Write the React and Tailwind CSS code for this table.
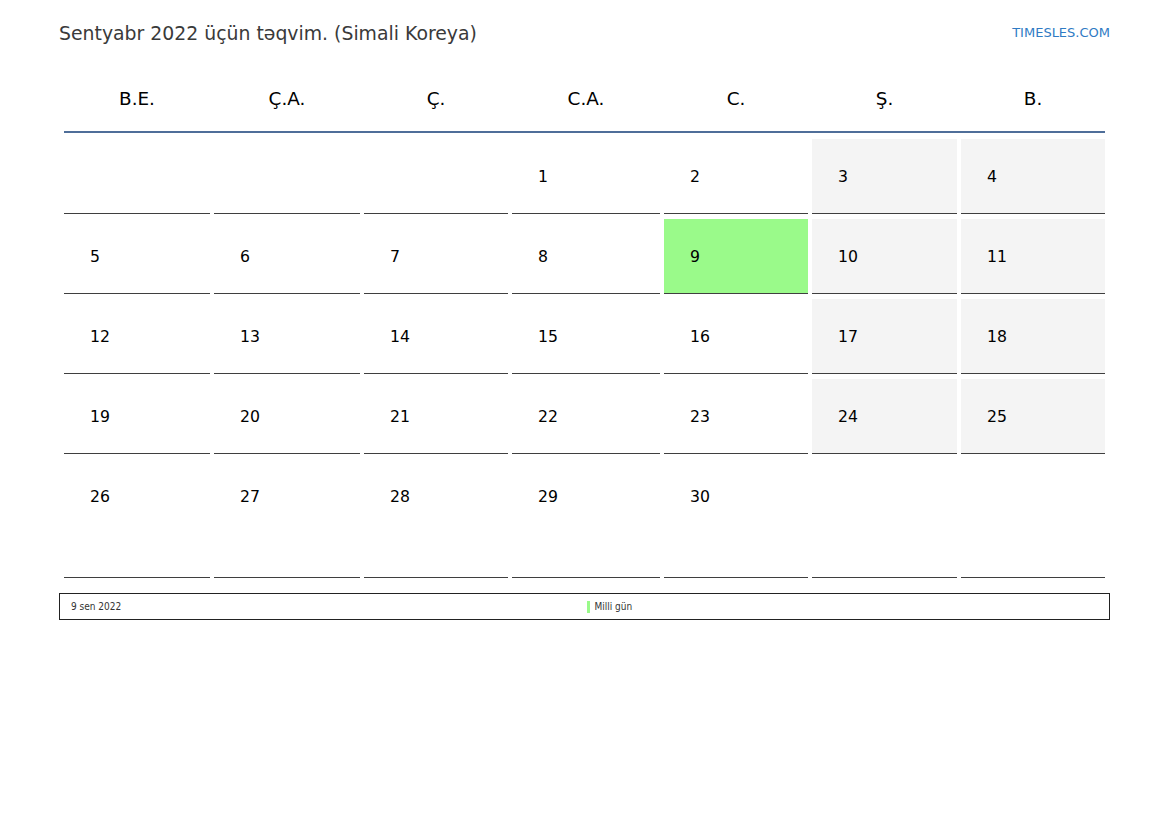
import React from "react";

const days = ["B.E.", "Ç.A.", "Ç.", "C.A.", "C.", "Ş.", "B."];

const weeks = [
  [null, null, null, 1, 2, 3, 4],
  [5, 6, 7, 8, 9, 10, 11],
  [12, 13, 14, 15, 16, 17, 18],
  [19, 20, 21, 22, 23, 24, 25],
  [26, 27, 28, 29, 30, null, null],
];

const cols = "grid-cols-[146px_146px_144px_148px_144px_145px_144px]";

export default function App() {
  return (
    <div className="w-[1169px] h-[827px] bg-white font-['DejaVu_Sans',sans-serif] text-black">
      <div className="mx-[59px] pt-[23px]">
        <div className="flex items-center justify-between h-[22px]">
          <div className="text-[18.85px] leading-[22px] text-[#3a3a3a]">
            Sentyabr 2022 üçün təqvim. (Simali Koreya)
          </div>
          <div className="text-[13px] leading-[16px] text-[#2f7bc4] -mt-[2px]">TIMESLES.COM</div>
        </div>

        <div className="px-[5px]">
          <div className={`grid ${cols} gap-x-[4px] pt-[43px] pb-[21px] border-b-2 border-[#4f6e99]`}>
            {days.map((d) => (
              <div key={d} className="text-center text-[18.4px] leading-[22px]">
                {d}
              </div>
            ))}
          </div>

          <div className={`grid ${cols} gap-x-[4px] gap-y-[5px] mt-[6px]`}>
            {weeks.map((week, wi) =>
              week.map((n, di) => {
                const weekend = di >= 5;
                const holiday = n === 9;
                const last = wi === weeks.length - 1;
                let bg = "bg-white";
                if (holiday) bg = "bg-[#9afa8a]";
                else if (weekend && !last) bg = "bg-[#f4f4f4]";
                return (
                  <div
                    key={`${wi}-${di}`}
                    className={`${last ? "h-[119px]" : "h-[75px]"} ${bg} border-b border-[#3f3f3f] pl-[26px] pt-[28px] text-[15.7px] leading-[19px]`}
                  >
                    {n}
                  </div>
                );
              })
            )}
          </div>
        </div>

        <div className="mt-[15px] h-[27px] border border-[#222] flex items-center font-['DejaVu_Sans_Condensed','DejaVu_Sans',sans-serif] text-[10px] text-[#333]">
          <div className="w-1/2 pl-[11px]">9 sen 2022</div>
          <div className="w-1/2 flex items-center">
            <span className="inline-block w-[3px] h-[12px] bg-[#9afa8a] ml-[2px] mr-[5px]"></span>
            <span>Milli gün</span>
          </div>
        </div>
      </div>
    </div>
  );
}
